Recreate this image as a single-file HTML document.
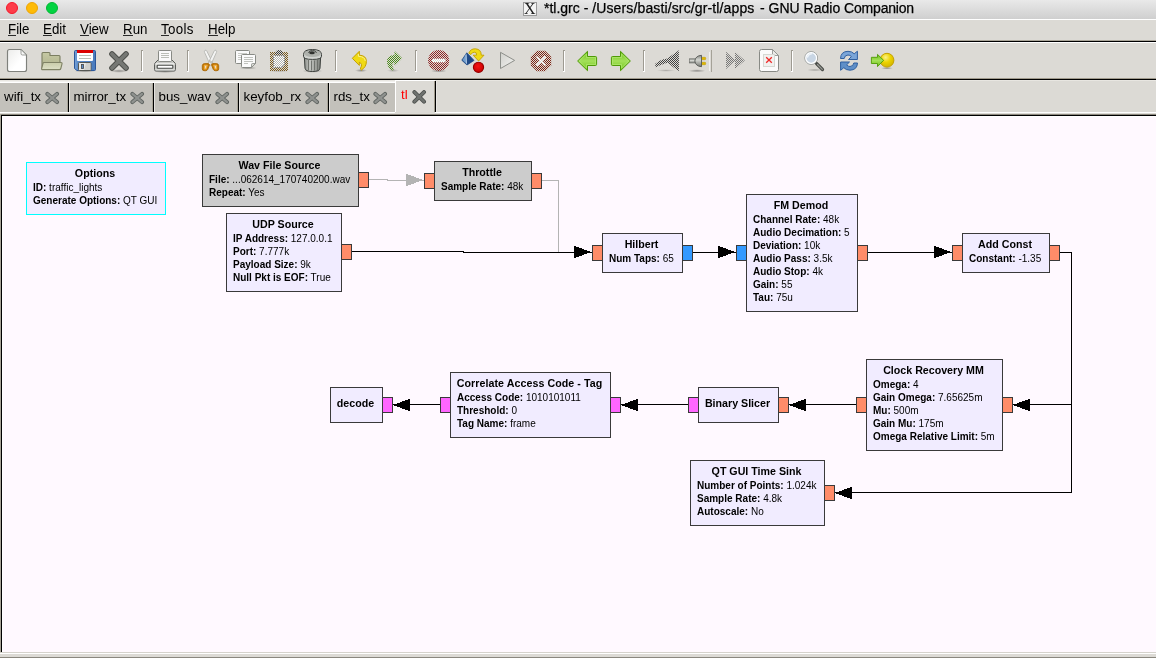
<!DOCTYPE html><html><head><meta charset="utf-8"><title>GNU Radio Companion</title><style>
html,body{margin:0;padding:0}
body{width:1156px;height:658px;overflow:hidden;background:#DCDAD5;position:relative;font-family:"Liberation Sans",sans-serif;color:#000;-webkit-font-smoothing:antialiased}
.blk,#menu,.tab,#ttext,#tlact,#xicon{will-change:transform}
.abs{position:absolute}
#title{position:absolute;left:0;top:0;width:1156px;height:19px;background:linear-gradient(#e9e9e9,#cfcfcf)}
#title .tl{position:absolute;top:2px;width:12px;height:12px;border-radius:50%;box-sizing:border-box}
#ttext{position:absolute;left:544px;top:0;height:19px;line-height:17px;font-size:14px;white-space:nowrap;-webkit-text-stroke:0.25px #000}
#xicon{position:absolute;left:523px;top:2px;width:14px;height:14px;box-sizing:border-box;border:1px solid #9a9a9a;background:#f4f4f4;font-family:"Liberation Serif",serif;font-size:16px;line-height:12px;text-align:center;color:#222;text-indent:-0.5px}
.hl{position:absolute;left:0;width:1156px;height:1px}
#menu{position:absolute;left:0;top:18.7px;height:20px;width:1156px;font-size:13.33px;line-height:20px}
#menu span{position:absolute;top:0;white-space:nowrap;transform:scaleY(1.08);transform-origin:0 0}
#menu u{text-decoration:underline;text-decoration-thickness:1px;text-underline-offset:1px;text-decoration-color:#333}
.tab{position:absolute;top:83px;height:29px;background:#C3C1BB;font-size:13.33px;line-height:28px;white-space:nowrap}
.tab span{position:absolute;top:0}
.tsep{position:absolute;top:83px;height:29px;width:1px;background:#000}
#canvas{position:absolute;left:2px;top:116px;width:1154px;height:536px;background:#FFF9FF}
.blk{position:absolute;box-sizing:border-box;border:1px solid #3a3a3a}
.bt{position:absolute;left:-21px;right:-19px;text-align:center;font-weight:bold;font-size:10.67px;line-height:13px;white-space:nowrap}
.bp{position:absolute;left:6px;font-size:10px;line-height:13px;white-space:nowrap}
.port{position:absolute;box-sizing:border-box;width:11px;height:16px;border:1px solid #3a3a3a}
.conn{position:absolute;left:0;top:0}
.ico{position:absolute;top:48px;width:24px;height:24px}
.sep{position:absolute;top:50px;width:1px;height:20px;background:#9d9a91;border-right:1px solid #fff}
</style></head><body><div id="title"><div class="tl" style="left:6px;background:#fd3c49;border:1px solid #f5182a"></div><div class="tl" style="left:26px;background:#febb07;border:1px solid #eea405"></div><div class="tl" style="left:46px;background:#03d342;border:1px solid #02b834"></div><div id="xicon">X</div><div id="ttext">*tl.grc - <span style="letter-spacing:0.13px">/Users/basti/src/gr-tl/apps</span><span style="letter-spacing:1.7px"> </span>- GNU Radio <span style="letter-spacing:-0.2px">Companion</span></div></div><div class="hl" style="top:19px;background:#fff"></div><div id="menu"><span style="left:8px">File</span><i style="position:absolute;left:8px;top:16.3px;width:8px;height:1px;background:#2a2a2a"></i><span style="left:43px">Edit</span><i style="position:absolute;left:43px;top:16.3px;width:9px;height:1px;background:#2a2a2a"></i><span style="left:80px">View</span><i style="position:absolute;left:80px;top:16.3px;width:9px;height:1px;background:#2a2a2a"></i><span style="left:123px">Run</span><i style="position:absolute;left:123px;top:16.3px;width:9.5px;height:1px;background:#2a2a2a"></i><span style="left:161px;letter-spacing:0.3px">Tools</span><i style="position:absolute;left:161px;top:16.3px;width:8px;height:1px;background:#2a2a2a"></i><span style="left:208px">Help</span><i style="position:absolute;left:208px;top:16.3px;width:9.5px;height:1px;background:#2a2a2a"></i></div><div class="hl" style="top:40px;background:#aaa599"></div><div class="hl" style="top:41px;background:#000"></div><div class="hl" style="top:42px;background:#fff"></div><div id="toolbar"><svg class="abs" style="left:0;top:43px" width="1156" height="36" viewBox="0 43 1156 36">
<defs>
<pattern id="stp" width="2" height="2" patternUnits="userSpaceOnUse"><rect x="0" y="0" width="1" height="1" fill="#fff"/><rect x="1" y="1" width="1" height="1" fill="#fff"/></pattern>
<mask id="stip" maskUnits="userSpaceOnUse" x="0" y="43" width="1156" height="36"><rect x="0" y="43" width="1156" height="36" fill="url(#stp)"/></mask>
<linearGradient id="gdoc" x1="0" y1="0" x2="1" y2="1"><stop offset="0" stop-color="#ececea"/><stop offset="0.6" stop-color="#ffffff"/></linearGradient>
<linearGradient id="gfold" x1="0" y1="0" x2="0" y2="1"><stop offset="0" stop-color="#c6c9a3"/><stop offset="1" stop-color="#adb08c"/></linearGradient>
<linearGradient id="gflap" x1="0" y1="0" x2="0" y2="1"><stop offset="0" stop-color="#c9ccaa"/><stop offset="1" stop-color="#dde0c6"/></linearGradient>
<linearGradient id="gblue" x1="0" y1="0" x2="1" y2="0"><stop offset="0" stop-color="#7aa3d6"/><stop offset="0.15" stop-color="#5b8ccb"/><stop offset="1" stop-color="#4a7bbd"/></linearGradient>
<linearGradient id="gtrash" x1="0" y1="0" x2="1" y2="0"><stop offset="0" stop-color="#8d908b"/><stop offset="0.35" stop-color="#c4c6c2"/><stop offset="1" stop-color="#7d807b"/></linearGradient>
<linearGradient id="glid" x1="0" y1="0" x2="0" y2="1"><stop offset="0" stop-color="#a5a8a3"/><stop offset="1" stop-color="#dcdedb"/></linearGradient>
<linearGradient id="ggreen" x1="0" y1="0" x2="0" y2="1"><stop offset="0" stop-color="#6cc012"/><stop offset="0.5" stop-color="#a3e05a"/><stop offset="1" stop-color="#6fc414"/></linearGradient>
<linearGradient id="gplay" x1="0" y1="0" x2="1" y2="1"><stop offset="0" stop-color="#d0d0cb"/><stop offset="1" stop-color="#f4f4f2"/></linearGradient>
<radialGradient id="gball" cx="0.4" cy="0.3" r="0.7"><stop offset="0" stop-color="#fbf08a"/><stop offset="0.5" stop-color="#edd400"/><stop offset="1" stop-color="#d4b600"/></radialGradient>
<radialGradient id="gred" cx="0.45" cy="0.4" r="0.6"><stop offset="0" stop-color="#f41414"/><stop offset="1" stop-color="#cc0000"/></radialGradient>
<radialGradient id="gshadow"><stop offset="0" stop-color="#000" stop-opacity="0.35"/><stop offset="1" stop-color="#000" stop-opacity="0"/></radialGradient>
<linearGradient id="gplug" x1="0" y1="0" x2="0" y2="1"><stop offset="0" stop-color="#888a85"/><stop offset="0.4" stop-color="#d3d5d0"/><stop offset="1" stop-color="#777974"/></linearGradient>
</defs>
<!-- separators -->
<g shape-rendering="crispEdges">
<path d="M141.5 50V71M187.5 50V71M335.5 50V71M415.5 50V71M563.5 50V71M643.5 50V71M791.5 50V71" stroke="#9d9a91" fill="none"/>
<path d="M142.5 51V72M188.5 51V72M336.5 51V72M416.5 51V72M564.5 51V72M644.5 51V72M792.5 51V72" stroke="#fff" fill="none"/>
<path d="M141 50.5h2M187 50.5h2M335 50.5h2M415 50.5h2M563 50.5h2M643 50.5h2M791 50.5h2" stroke="#9d9a91"/>
<path d="M141 71.5h2M187 71.5h2M335 71.5h2M415 71.5h2M563 71.5h2M643 71.5h2M791 71.5h2" stroke="#fff"/>
<path d="M709.5 52V71" stroke="#f1f0ed"/><path d="M711.5 50V72" stroke="#a5a298"/>
</g>
<!-- new document -->
<path d="M9.5 49.5H21L26.5 55V69.5Q26.5 71.5 24.5 71.5H9.5Q7.5 71.5 7.5 69.5V51.5Q7.5 49.5 9.5 49.5Z" fill="url(#gdoc)" stroke="#7f817c" stroke-width="1.15"/>
<path d="M21 49.5V53.5Q21 55 22.5 55H26.5Z" fill="#f6f6f5" stroke="#888a85" stroke-width="0.8" stroke-linejoin="round"/>
<!-- open folder -->
<path d="M42 53.5Q42 52.5 43 52.5H49Q50 52.5 50 53.5V55.5H59Q60 55.5 60 56.5V69H42Z" fill="url(#gfold)" stroke="#7b7e61" stroke-width="1.1"/>
<path d="M44 62.5H61Q62.3 62.5 62 63.8L60.8 68.5Q60.5 69.6 59.3 69.6H42.6Q41.4 69.6 41.7 68.4L43 63.5Q43.2 62.5 44 62.5Z" fill="url(#gflap)" stroke="#7f8265" stroke-width="1.1"/>
<!-- save floppy -->
<ellipse cx="85" cy="71" rx="11" ry="1.6" fill="url(#gshadow)"/>
<path d="M75.5 50.5H94.5Q95.5 50.5 95.5 51.5V69.5Q95.5 70.5 94.5 70.5H77L74.5 68.5V51.5Q74.5 50.5 75.5 50.5Z" fill="url(#gblue)" stroke="#2c579a"/>
<path d="M77 50H93V60Q93 61 92 61H78Q77 61 77 60Z" fill="#fff"/>
<rect x="77" y="50" width="16" height="3" fill="#dc0000"/>
<path d="M79 55.5H91M79 58.5H91" stroke="#babdb6"/>
<rect x="78.5" y="62.5" width="12.5" height="8" rx="1" fill="#e9e9e7" stroke="#555753"/>
<path d="M86 63L90.5 63V70H84Z" fill="#c4c4c2" opacity="0.7"/>
<rect x="81.5" y="64.5" width="2" height="4" fill="#5b8ccb" stroke="#444" stroke-width="0.8"/>
<!-- close X -->
<ellipse cx="119" cy="71" rx="9" ry="1.8" fill="url(#gshadow)"/>
<path d="M112 54L126 68M126 54L112 68" stroke="#4b4d49" stroke-width="5.6" stroke-linecap="round"/>
<path d="M112 54L126 68M126 54L112 68" stroke="#767874" stroke-width="3.8" stroke-linecap="round"/>
<!-- print -->
<ellipse cx="165" cy="71.5" rx="11" ry="1.5" fill="url(#gshadow)"/>
<path d="M158.5 59.5L155 63Q154.5 63.6 154.5 64.6V69.5Q154.5 71 156 71H174Q175.5 71 175.5 69.5V64.6Q175.5 63.6 175 63L171.5 59.5Z" fill="#c9cac6" stroke="#5b5d59"/>
<path d="M155.6 63.2H174.4V64.6H155.6Z" fill="#f2f2f0"/>
<rect x="158.5" y="50.5" width="13" height="11" rx="0.8" fill="#fafafa" stroke="#888a85"/>
<path d="M161 53.5H169M161 55.5H169M161 57.5H169" stroke="#babdb6"/>
<rect x="157.2" y="65.3" width="15.6" height="3" rx="0.6" fill="#fff" stroke="#4a4c48" stroke-width="1.1"/>
<path d="M155.5 69.9H174.5" stroke="#e4e5e2"/>
<!-- cut scissors -->
<path d="M205 50.3Q206.2 49.8 206.8 51L213.5 64.5L210.5 65.5L204.6 52.5Q204 51 205 50.3Z" fill="#f4f4f3" stroke="#b5b7b2" stroke-width="0.9"/>
<path d="M216 50.3Q214.8 49.8 214.2 51L207.5 64.5L210.5 65.5L216.4 52.5Q217 51 216 50.3Z" fill="#f4f4f3" stroke="#b5b7b2" stroke-width="0.9"/>
<circle cx="210.5" cy="61.8" r="1" fill="#d3d7cf" stroke="#a3a5a0" stroke-width="0.5"/>
<path d="M204.5 63.6H208.2Q209.8 63.8 209.3 65.3L207.8 69.3Q207.2 70.7 205.7 70.7H204Q202.3 70.6 202.3 69V65.6Q202.5 63.7 204.5 63.6Z" fill="#c67a06" stroke="#a86400" stroke-width="0.8"/>
<path d="M216.5 63.6H212.8Q211.2 63.8 211.7 65.3L213.2 69.3Q213.8 70.7 215.3 70.7H217Q218.7 70.6 218.7 69V65.6Q218.5 63.7 216.5 63.6Z" fill="#c67a06" stroke="#a86400" stroke-width="0.8"/>
<path d="M204.4 65.3H207.2L206 69H204.4Z M216.6 65.3H213.8L215 69H216.6Z" fill="#e3ddd0" stroke="#f0aa36" stroke-width="1.1" stroke-linejoin="round"/>
<!-- copy -->
<ellipse cx="248" cy="68" rx="9" ry="1.5" fill="url(#gshadow)"/>
<rect x="235.5" y="50.5" width="14" height="13" rx="1" fill="#fafafa" stroke="#888a85"/>
<path d="M238 53.5H247M238 55.5H247M238 57.5H247M238 59.5H247" stroke="#c9cbc6"/>
<path d="M242.5 54.5H254.5Q255.5 54.5 255.5 55.5V63.5L251.5 67.5H242.5Q241.5 67.5 241.5 66.5V55.5Q241.5 54.5 242.5 54.5Z" fill="#fbfbfb" stroke="#888a85"/>
<path d="M244 57.5H253M244 59.5H253M244 61.5H253M244 63.5H248" stroke="#c0c2bd"/>
<path d="M255.5 63.5H252.5Q251.5 63.5 251.5 64.5V67.5Z" fill="#d8dad5" stroke="#888a85" stroke-width="0.8" stroke-linejoin="round"/>
<!-- paste (disabled, stippled) -->
<ellipse cx="279" cy="71" rx="10" ry="1.5" fill="url(#gshadow)" opacity="0.5"/>
<path d="M273.5 55.5H284.5V65L281.5 67.5H273.5Z" fill="#b4b4b1"/>
<g mask="url(#stip)">
<path d="M270 52H288V71H270Z" fill="#7a5a20"/>
<path d="M275 54.5Q275 50 279 50Q283 50 283 54.5Z" fill="#3c3c3c"/>
<path d="M273 55H285V65L282 68H273Z" fill="#ffffff"/>
<path d="M273.5 55.5H284.5V65L281.5 67.5H273.5Z" fill="none" stroke="#777" />
</g>
<!-- trash -->
<ellipse cx="312.5" cy="71" rx="10" ry="1.8" fill="url(#gshadow)"/>
<path d="M304.3 56L305 68.2Q305.3 71.5 312.5 71.5Q319.7 71.5 320 68.2L320.7 56Z" fill="url(#gtrash)" stroke="#3c403d"/>
<path d="M308.5 60V70M311.5 60.5V70.5M314.5 60.5V70.5M317.5 60V70" stroke="#6a6d68" stroke-width="0.9"/>
<path d="M303.5 54.5Q303.5 49.5 312.5 49.5Q321.5 49.5 321.5 54.5V56.3Q321.5 59.4 312.5 59.4Q303.5 59.4 303.5 56.3Z" fill="url(#glid)" stroke="#3c403d"/>
<ellipse cx="312.5" cy="53.6" rx="8.2" ry="3.4" fill="#aeb1ac"/>
<ellipse cx="312" cy="52.8" rx="2.8" ry="1.5" fill="#2e302d"/>
<path d="M308.5 53Q309 50.4 312.5 50.4Q316 50.4 316.5 53" fill="none" stroke="#4a4d49" stroke-width="1"/>
<!-- undo -->
<ellipse cx="361" cy="70.5" rx="6" ry="1.6" fill="url(#gshadow)"/>
<path d="M359.3 51.3V55.2Q366.4 55.4 366.4 61.5Q366.4 67 361.4 70Q360.2 69.5 360.6 68Q363 64 359.3 62.2V65.4L352.3 58.3Z" fill="#f0da14" stroke="#c4a000" stroke-linejoin="round"/>
<path d="M358.4 54V56.3Q365 56.6 365.3 61" fill="none" stroke="#fbf3a0" stroke-width="0.9"/>
<!-- redo stippled -->
<ellipse cx="393" cy="70.5" rx="6" ry="1.6" fill="url(#gshadow)" opacity="0.6"/>
<g mask="url(#stip)">
<path d="M394.5 50.8V54.9Q387 55 387 61.5Q387 67.4 392.4 70.6Q394.2 69.8 393.6 68.2Q390.6 64.2 394.5 62.6V66L402.2 58.3Z" fill="#4b8b1b"/>
</g>
<!-- no entry stippled -->
<ellipse cx="438.7" cy="71" rx="8" ry="1.6" fill="url(#gshadow)"/>
<g mask="url(#stip)">
<circle cx="438.7" cy="60.5" r="10.6" fill="#8e2424"/>
<rect x="432" y="58.8" width="13.6" height="3.4" rx="1" fill="#ffffff"/>
</g>

<!-- convert -->
<path d="M466.8 52.8L474 60.4L467 65L461.8 60.2Z" fill="#204a87" stroke="#204a87" stroke-width="0.8" stroke-linejoin="round"/>
<path d="M466.6 53.5L466.9 64.2L462.5 60.1Z" fill="#729fcf"/>
<path d="M466 54.5L466.5 63.5" stroke="#c3d6ec" stroke-width="0.8"/>
<path d="M468.8 53.2Q470.5 48.6 475.5 48.8Q481.2 49.2 481.3 55.2H484L478.6 61L473.2 55.2H476.6Q476.8 52.4 474.8 52.2Q472.2 52 470.9 54.5Z" fill="#f0da14" stroke="#c4a000" stroke-width="0.9" stroke-linejoin="round"/>
<circle cx="478.5" cy="67.3" r="5.1" fill="url(#gred)" stroke="#960000" stroke-width="1.1"/>
<!-- play disabled -->
<path d="M500.5 52.3L514.6 60.4L500.5 68.5Z" fill="url(#gplay)" stroke="#8c8e89" stroke-linejoin="round"/>
<!-- stop stippled -->
<g mask="url(#stip)">
<path d="M536.8 50.8H545.2L551.2 56.8V65.2L545.2 71.2H536.8L530.8 65.2V56.8Z" fill="#7c2414"/>
<path d="M536.5 56.5L545.5 65.5M545.5 56.5L536.5 65.5" stroke="#fff" stroke-width="2.2"/>
</g>
<path d="M536.8 56.8L545.2 65.2M545.2 56.8L536.8 65.2" stroke="#fff" stroke-width="1.2" opacity="0.15"/>
<!-- left/right arrows -->
<path d="M577.6 61L587.5 51.3V56.5H595.5Q596.6 56.5 596.6 57.6V64.4Q596.6 65.5 595.5 65.5H587.5V70.7Z" fill="url(#ggreen)" stroke="#4e9a06" stroke-linejoin="round"/>
<path d="M579.3 61L586.5 54V57.5H595.5V64.5H586.5V68Z" fill="none" stroke="#b6ea7a" stroke-width="0.8" opacity="0.8"/>
<path d="M630.4 61L620.5 51.3V56.5H612.5Q611.4 56.5 611.4 57.6V64.4Q611.4 65.5 612.5 65.5H620.5V70.7Z" fill="url(#ggreen)" stroke="#4e9a06" stroke-linejoin="round"/>
<path d="M628.7 61L621.5 54V57.5H612.5V64.5H621.5V68Z" fill="none" stroke="#b6ea7a" stroke-width="0.8" opacity="0.8"/>
<!-- connect stippled -->
<g mask="url(#stip)">
<path d="M654.9 63.9L659.6 60.7L663.5 59.2L667.4 58.4L669.7 56.8L673.6 54.1L678.9 50.2V70.9L673.6 67.4L669.7 64.2L667.4 62.7L663.5 63.9L659.6 65.4L655.7 67.2Z" fill="#404040"/>
</g>
<ellipse cx="666" cy="70.5" rx="9" ry="1.3" fill="url(#gshadow)" opacity="0.6"/>
<!-- plug -->
<ellipse cx="697" cy="70.8" rx="8.5" ry="1.6" fill="url(#gshadow)"/>
<rect x="701.5" y="57.3" width="4.2" height="2.4" rx="0.8" fill="#e0b800" stroke="#b89600" stroke-width="0.5"/>
<rect x="701.5" y="62.3" width="4.2" height="2.4" rx="0.8" fill="#e0b800" stroke="#b89600" stroke-width="0.5"/>
<rect x="689.3" y="58.8" width="8" height="4.2" fill="url(#gplug)" stroke="#6a6c68" stroke-width="0.6"/>
<path d="M701.5 55.3V66.7Q695.5 66.2 694.8 61Q695.5 55.8 701.5 55.3Z" fill="url(#gplug)" stroke="#555753" stroke-width="0.9"/>
<!-- forward stippled -->
<g mask="url(#stip)">
<path d="M726 51.8L735.5 60.4L726 69Z M735 51.8L744.8 60.4L735 69Z" fill="#777"/>
</g>
<!-- missing image -->
<path d="M761.5 49.5H772.5L778.5 55.5V69.5Q778.5 71.5 776.5 71.5H761.5Q759.5 71.5 759.5 69.5V51.5Q759.5 49.5 761.5 49.5Z" fill="#fbfbfb" stroke="#888a85"/>
<path d="M772.5 49.5V54Q772.5 55.5 774 55.5H778.5Z" fill="#ececea" stroke="#888a85" stroke-width="0.8" stroke-linejoin="round"/>
<rect x="763.5" y="54.5" width="11" height="12" fill="#f1f1ef" stroke="#d6d8d3"/>
<path d="M766.2 57.2L771.8 62.8M771.8 57.2L766.2 62.8" stroke="#ef2929" stroke-width="1.3"/>
<!-- zoom -->
<ellipse cx="815" cy="70" rx="8" ry="1.5" fill="url(#gshadow)" opacity="0.7"/>
<path d="M816.5 63.5L822.5 69.5" stroke="#4a4c48" stroke-width="3.2" stroke-linecap="round"/>
<path d="M817.5 64.5L822.3 69.3" stroke="#9a9c97" stroke-width="1.2" stroke-linecap="round"/>
<circle cx="811.2" cy="58" r="6.4" fill="#c9d6e4" stroke="#9c9e99" stroke-width="1"/>
<circle cx="811.2" cy="58" r="5.4" fill="none" stroke="#fff" stroke-width="1.3"/>
<path d="M807.5 57Q808.5 54 811.5 53.8" stroke="#eef3f8" stroke-width="1.5" fill="none" stroke-linecap="round"/>
<!-- refresh -->
<path d="M840.5 58.5Q840.8 51.5 848 51.3Q852 51.3 854.2 53.8L857.4 51.2V59.5H848.5L851.4 56.6Q850 55 848 55Q844.5 55.2 844.2 58.5Z" fill="#7aa5d8" stroke="#2f5f9f" stroke-linejoin="round"/>
<path d="M857.5 63Q857.2 70 850 70.2Q846 70.2 843.8 67.7L840.6 70.3V62H849.5L846.6 64.9Q848 66.5 850 66.5Q853.5 66.3 853.8 63Z" fill="#5f8fc8" stroke="#2f5f9f" stroke-linejoin="round"/>
<!-- jump to -->
<ellipse cx="887" cy="68.2" rx="6" ry="1.3" fill="url(#gshadow)"/>
<circle cx="887" cy="60.2" r="6.9" fill="url(#gball)" stroke="#c4a000"/>
<path d="M871.4 57.3H877.5V54.4L883.6 60.3L877.5 66.6V63.5H871.4Z" fill="url(#ggreen)" stroke="#4e9a06" stroke-width="0.9" stroke-linejoin="round"/>
</svg>
</div><div class="hl" style="top:78px;background:#a09a8c"></div><div class="hl" style="top:79px;background:#000"></div><div class="hl" style="top:80px;background:#e8e6e1"></div><div class="hl" style="top:81px;background:#f2f1ee"></div><div class="hl" style="top:82px;background:#fff"></div><div class="tab" style="left:0px;width:68px"><span style="left:4px">wifi_tx</span></div><svg class="abs" style="left:45px;top:91px" width="15" height="14" viewBox="0 0 15 14"><path d="M2.4 2.9L12 11.1M12 2.9L2.4 11.1" stroke="#5f6461" stroke-width="4" stroke-linecap="round"/><path d="M2.4 2.9L12 11.1M12 2.9L2.4 11.1" stroke="#8f928f" stroke-width="2.2" stroke-linecap="round"/></svg><div class="tab" style="left:69px;width:84px"><span style="left:4.5px">mirror_tx</span></div><svg class="abs" style="left:130px;top:91px" width="15" height="14" viewBox="0 0 15 14"><path d="M2.4 2.9L12 11.1M12 2.9L2.4 11.1" stroke="#5f6461" stroke-width="4" stroke-linecap="round"/><path d="M2.4 2.9L12 11.1M12 2.9L2.4 11.1" stroke="#8f928f" stroke-width="2.2" stroke-linecap="round"/></svg><div class="tab" style="left:154px;width:84px"><span style="left:4.5px">bus_wav</span></div><svg class="abs" style="left:215px;top:91px" width="15" height="14" viewBox="0 0 15 14"><path d="M2.4 2.9L12 11.1M12 2.9L2.4 11.1" stroke="#5f6461" stroke-width="4" stroke-linecap="round"/><path d="M2.4 2.9L12 11.1M12 2.9L2.4 11.1" stroke="#8f928f" stroke-width="2.2" stroke-linecap="round"/></svg><div class="tab" style="left:239px;width:89px"><span style="left:4.5px">keyfob_rx</span></div><svg class="abs" style="left:305px;top:91px" width="15" height="14" viewBox="0 0 15 14"><path d="M2.4 2.9L12 11.1M12 2.9L2.4 11.1" stroke="#5f6461" stroke-width="4" stroke-linecap="round"/><path d="M2.4 2.9L12 11.1M12 2.9L2.4 11.1" stroke="#8f928f" stroke-width="2.2" stroke-linecap="round"/></svg><div class="tab" style="left:329px;width:66px"><span style="left:4.5px">rds_tx</span></div><svg class="abs" style="left:373px;top:91px" width="15" height="14" viewBox="0 0 15 14"><path d="M2.4 2.9L12 11.1M12 2.9L2.4 11.1" stroke="#5f6461" stroke-width="4" stroke-linecap="round"/><path d="M2.4 2.9L12 11.1M12 2.9L2.4 11.1" stroke="#8f928f" stroke-width="2.2" stroke-linecap="round"/></svg><div class="tsep" style="left:68px"></div><div class="tsep" style="left:69px;background:#e4e2de"></div><div class="tsep" style="left:67px;background:#a8a498"></div><div class="tsep" style="left:153px"></div><div class="tsep" style="left:154px;background:#e4e2de"></div><div class="tsep" style="left:152px;background:#a8a498"></div><div class="tsep" style="left:238px"></div><div class="tsep" style="left:239px;background:#e4e2de"></div><div class="tsep" style="left:237px;background:#a8a498"></div><div class="tsep" style="left:328px"></div><div class="tsep" style="left:329px;background:#e4e2de"></div><div class="tsep" style="left:327px;background:#a8a498"></div><div class="hl" style="top:112px;background:#fff"></div><div class="hl" style="top:113px;background:#dcdad5"></div><div class="abs" style="left:395px;top:80px;width:40px;height:33px;background:#DCDAD5"></div><div class="abs" style="left:395px;top:80px;width:40px;height:1px;background:#fff"></div><div class="abs" style="left:436px;top:81px;width:720px;height:2px;background:#DCDAD5"></div><div class="abs" style="left:436px;top:81px;width:1px;height:31px;background:#e8e6e2"></div><div class="abs" style="left:395px;top:80px;width:1px;height:32px;background:#fff"></div><div class="abs" style="left:435px;top:81px;width:1px;height:31px;background:#000"></div><div class="abs" style="left:434px;top:81px;width:1px;height:31px;background:#a09a8c"></div><div class="abs" id="tlact" style="left:401px;top:81px;font-size:13.33px;line-height:28px;color:#ff0000">tl</div><svg class="abs" style="left:412px;top:90px" width="15" height="14" viewBox="0 0 15 14"><path d="M2.4 2.1L12 11.7M12 2.1L2.4 11.7" stroke="#4a4d4a" stroke-width="4" stroke-linecap="round"/><path d="M2.4 2.1L12 11.7M12 2.1L2.4 11.7" stroke="#6f726f" stroke-width="2.4" stroke-linecap="round"/></svg><div class="hl" style="top:114px;background:#8d897f"></div><div class="hl" style="top:115px;background:#000;left:1px"></div><div class="abs" style="left:0;top:114px;width:1px;height:539px;background:#a8a498"></div><div class="abs" style="left:1px;top:115px;width:1px;height:537px;background:#000"></div><div class="abs" style="left:2px;top:116px;width:1154px;height:536px;background:#fff"></div><div class="abs" style="left:3px;top:117px;width:1153px;height:535px;background:#FFF9FF"></div><div class="hl" style="top:652px;background:#d5d2cc"></div><div class="hl" style="top:653px;background:#fff"></div><div class="hl" style="top:654px;height:3px;background:#dcdad5"></div><div class="hl" style="top:657px;background:#8a877f"></div><svg class="conn" width="1156" height="658" viewBox="0 0 1156 658"><g fill="none" stroke="#b4b4b4" stroke-width="1" shape-rendering="crispEdges"><path d="M369 179.5H387.5V180.5H424"/><path d="M542 180.5H558.5V252"/></g><polygon points="423.2,180 406,173.6 406,186.4" fill="#b4b4b4" shape-rendering="crispEdges"/><g fill="none" stroke="#000" stroke-width="1" shape-rendering="crispEdges"><path d="M352 251.5H463.5V252.5H592"/><path d="M693 252.5H736"/><path d="M868 252.5H952"/><path d="M1060 252.5H1071.5V492.5H835"/><path d="M1071 404.5H1013"/><path d="M856 404.5H789"/><path d="M688 404.5H621"/><path d="M440 404.5H393"/></g><polygon points="591.2,252 574,245.6 574,258.4" fill="#000" shape-rendering="crispEdges"/><polygon points="735.2,252 718,245.6 718,258.4" fill="#000" shape-rendering="crispEdges"/><polygon points="951.2,252 934,245.6 934,258.4" fill="#000" shape-rendering="crispEdges"/><polygon points="1012.8,405 1030,398.6 1030,411.4" fill="#000" shape-rendering="crispEdges"/><polygon points="834.8,493 852,486.6 852,499.4" fill="#000" shape-rendering="crispEdges"/><polygon points="788.8,405 806,398.6 806,411.4" fill="#000" shape-rendering="crispEdges"/><polygon points="620.8,405 638,398.6 638,411.4" fill="#000" shape-rendering="crispEdges"/><polygon points="392.8,405 410,398.6 410,411.4" fill="#000" shape-rendering="crispEdges"/></svg><div class="blk" style="left:26px;top:162px;width:140px;height:53px;background:#F1ECFF;border-color:#00FFFF"><div class="bt" style="top:4.0px">Options</div><div class="bp" style="top:18.0px"><b>ID:</b> traffic_lights</div><div class="bp" style="top:31.0px"><b>Generate Options:</b> QT GUI</div></div><div class="blk" style="left:202px;top:154px;width:157px;height:53px;background:#CCCCCC;border-color:#3a3a3a"><div class="bt" style="top:4.0px">Wav File Source</div><div class="bp" style="top:18.0px"><b>File:</b> ...062614_170740200.wav</div><div class="bp" style="top:31.0px"><b>Repeat:</b> Yes</div></div><div class="blk" style="left:434px;top:161px;width:98px;height:40px;background:#CCCCCC;border-color:#3a3a3a"><div class="bt" style="top:4.0px">Throttle</div><div class="bp" style="top:18.0px"><b>Sample Rate:</b> 48k</div></div><div class="blk" style="left:226px;top:213px;width:116px;height:79px;background:#F1ECFF;border-color:#3a3a3a"><div class="bt" style="top:4.0px">UDP Source</div><div class="bp" style="top:18.0px"><b>IP Address:</b> 127.0.0.1</div><div class="bp" style="top:31.0px"><b>Port:</b> 7.777k</div><div class="bp" style="top:44.0px"><b>Payload Size:</b> 9k</div><div class="bp" style="top:57.0px"><b>Null Pkt is EOF:</b> True</div></div><div class="blk" style="left:602px;top:233px;width:81px;height:40px;background:#F1ECFF;border-color:#3a3a3a"><div class="bt" style="top:4.0px">Hilbert</div><div class="bp" style="top:18.0px"><b>Num Taps:</b> 65</div></div><div class="blk" style="left:746px;top:194px;width:112px;height:118px;background:#F1ECFF;border-color:#3a3a3a"><div class="bt" style="top:4.0px">FM Demod</div><div class="bp" style="top:18.0px"><b>Channel Rate:</b> 48k</div><div class="bp" style="top:31.0px"><b>Audio Decimation:</b> 5</div><div class="bp" style="top:44.0px"><b>Deviation:</b> 10k</div><div class="bp" style="top:57.0px"><b>Audio Pass:</b> 3.5k</div><div class="bp" style="top:70.0px"><b>Audio Stop:</b> 4k</div><div class="bp" style="top:83.0px"><b>Gain:</b> 55</div><div class="bp" style="top:96.0px"><b>Tau:</b> 75u</div></div><div class="blk" style="left:962px;top:233px;width:88px;height:40px;background:#F1ECFF;border-color:#3a3a3a"><div class="bt" style="top:4.0px">Add Const</div><div class="bp" style="top:18.0px"><b>Constant:</b> -1.35</div></div><div class="blk" style="left:866px;top:359px;width:137px;height:92px;background:#F1ECFF;border-color:#3a3a3a"><div class="bt" style="top:4.0px">Clock Recovery MM</div><div class="bp" style="top:18.0px"><b>Omega:</b> 4</div><div class="bp" style="top:31.0px"><b>Gain Omega:</b> 7.65625m</div><div class="bp" style="top:44.0px"><b>Mu:</b> 500m</div><div class="bp" style="top:57.0px"><b>Gain Mu:</b> 175m</div><div class="bp" style="top:70.0px"><b>Omega Relative Limit:</b> 5m</div></div><div class="blk" style="left:698px;top:387px;width:81px;height:36px;background:#F1ECFF;border-color:#3a3a3a"><div class="bt" style="top:8.5px">Binary Slicer</div></div><div class="blk" style="left:450px;top:372px;width:161px;height:66px;background:#F1ECFF;border-color:#3a3a3a"><div class="bt" style="top:4.0px;letter-spacing:0.06px">Correlate Access Code - Tag</div><div class="bp" style="top:18.0px"><b>Access Code:</b> 1010101011</div><div class="bp" style="top:31.0px"><b>Threshold:</b> 0</div><div class="bp" style="top:44.0px"><b>Tag Name:</b> frame</div></div><div class="blk" style="left:330px;top:387px;width:53px;height:36px;background:#F1ECFF;border-color:#3a3a3a"><div class="bt" style="top:8.5px">decode</div></div><div class="blk" style="left:690px;top:460px;width:135px;height:66px;background:#F1ECFF;border-color:#3a3a3a"><div class="bt" style="top:4.0px">QT GUI Time Sink</div><div class="bp" style="top:18.0px"><b>Number of Points:</b> 1.024k</div><div class="bp" style="top:31.0px"><b>Sample Rate:</b> 4.8k</div><div class="bp" style="top:44.0px"><b>Autoscale:</b> No</div></div><div class="port" style="left:358px;top:172px;background:#FF8C69"></div><div class="port" style="left:424px;top:173px;background:#FF8C69"></div><div class="port" style="left:531px;top:173px;background:#FF8C69"></div><div class="port" style="left:341px;top:244px;background:#FF8C69"></div><div class="port" style="left:592px;top:245px;background:#FF8C69"></div><div class="port" style="left:682px;top:245px;background:#3399FF"></div><div class="port" style="left:736px;top:245px;background:#3399FF"></div><div class="port" style="left:857px;top:245px;background:#FF8C69"></div><div class="port" style="left:952px;top:245px;background:#FF8C69"></div><div class="port" style="left:1049px;top:245px;background:#FF8C69"></div><div class="port" style="left:856px;top:397px;background:#FF8C69"></div><div class="port" style="left:1002px;top:397px;background:#FF8C69"></div><div class="port" style="left:688px;top:397px;background:#FF66FF"></div><div class="port" style="left:778px;top:397px;background:#FF8C69"></div><div class="port" style="left:440px;top:397px;background:#FF66FF"></div><div class="port" style="left:610px;top:397px;background:#FF66FF"></div><div class="port" style="left:382px;top:397px;background:#FF66FF"></div><div class="port" style="left:824px;top:485px;background:#FF8C69"></div></body></html>
